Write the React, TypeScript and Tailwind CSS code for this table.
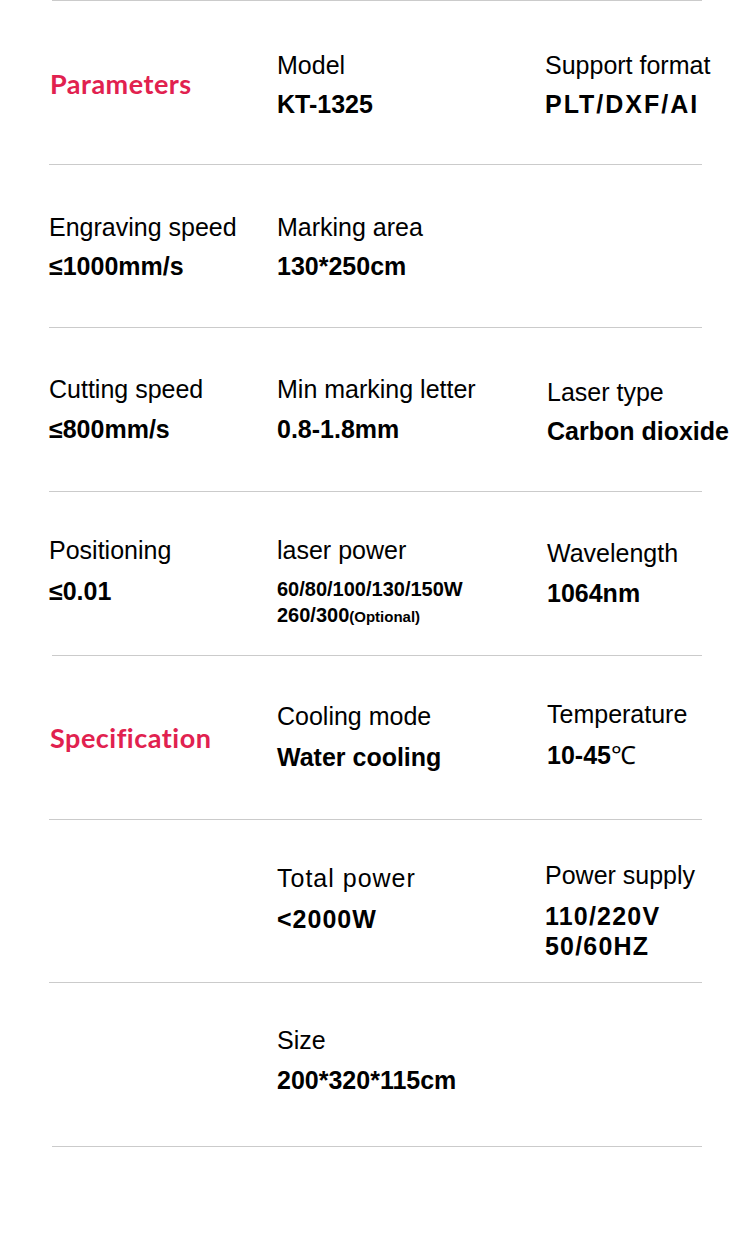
import type { ReactNode } from "react";

type Cell = {
  pad: string;
  label?: string;
  labelClass?: string;
  value?: ReactNode;
  valueClass?: string;
  valueSize?: string;
  heading?: string;
};

type Row = {
  height: string;
  line: string;
  cells: Cell[];
};

const arial = { fontFamily: '"Liberation Sans", Arial, sans-serif' };
const lato = { fontFamily: 'Lato, "Noto Sans", sans-serif', fontVariantLigatures: "none" as const };

const rows: Row[] = [
  {
    height: "h-[163px]",
    line: "ml-[52px] w-[650px]",
    cells: [
      { pad: "pt-[69px]", heading: "Parameters" },
      { pad: "pt-[52px]", label: "Model", value: "KT-1325", valueClass: "mt-[14px]" },
      {
        pad: "pt-[52px]",
        label: "Support format",
        value: "PLT/DXF/AI",
        valueClass: "mt-[14px] tracking-[2px]",
      },
    ],
  },
  {
    height: "h-[162px]",
    line: "ml-[49px] w-[653px]",
    cells: [
      { pad: "pt-[50px]", label: "Engraving speed", value: "≤1000mm/s", valueClass: "mt-[14px]" },
      { pad: "pt-[50px]", label: "Marking area", value: "130*250cm", valueClass: "mt-[14px]" },
      { pad: "pt-[50px]" },
    ],
  },
  {
    height: "h-[163px]",
    line: "ml-[49px] w-[653px]",
    cells: [
      { pad: "pt-[49px]", label: "Cutting speed", value: "≤800mm/s", valueClass: "mt-[15px]" },
      { pad: "pt-[49px]", label: "Min marking letter", value: "0.8-1.8mm", valueClass: "mt-[15px]" },
      {
        pad: "pt-[52px] pl-[2px]",
        label: "Laser type",
        value: "Carbon dioxide",
        valueClass: "mt-[14px]",
      },
    ],
  },
  {
    height: "h-[163px]",
    line: "ml-[49px] w-[653px]",
    cells: [
      { pad: "pt-[46px]", label: "Positioning", value: "≤0.01", valueClass: "mt-[16px]" },
      {
        pad: "pt-[46px]",
        label: "laser power",
        value: (
          <>
            60/80/100/130/150W
            <br />
            260/300<span className="text-[15px]">(Optional)</span>
          </>
        ),
        valueSize: "text-[20px] leading-[26px]",
        valueClass: "mt-[13px]",
      },
      {
        pad: "pt-[49px] pl-[2px]",
        label: "Wavelength",
        value: "1064nm",
        valueClass: "mt-[15px]",
      },
    ],
  },
  {
    height: "h-[163px]",
    line: "ml-[52px] w-[650px]",
    cells: [
      { pad: "pt-[68px]", heading: "Specification" },
      { pad: "pt-[48px]", label: "Cooling mode", value: "Water cooling", valueClass: "mt-[16px]" },
      {
        pad: "pt-[46px] pl-[2px]",
        label: "Temperature",
        value: (
          <>
            10-45<span className="font-normal">℃</span>
          </>
        ),
        valueClass: "mt-[16px]",
      },
    ],
  },
  {
    height: "h-[162px]",
    line: "ml-[49px] w-[653px]",
    cells: [
      { pad: "pt-[46px]" },
      {
        pad: "pt-[46px]",
        label: "Total power",
        labelClass: "tracking-[1px]",
        value: "<2000W",
        valueClass: "mt-[16px] tracking-[1px]",
      },
      {
        pad: "pt-[43px]",
        label: "Power supply",
        value: (
          <>
            110/220V
            <br />
            50/60HZ
          </>
        ),
        valueSize: "text-[25px] leading-[30px]",
        valueClass: "mt-[13px] tracking-[1.2px]",
      },
    ],
  },
  {
    height: "h-[163px]",
    line: "ml-[49px] w-[653px]",
    cells: [
      { pad: "pt-[45px]" },
      { pad: "pt-[45px]", label: "Size", value: "200*320*115cm", valueClass: "mt-[15px]" },
      { pad: "pt-[45px]" },
    ],
  },
];

function SpecCell({ cell }: { cell: Cell }) {
  if (cell.heading) {
    return (
      <div className={cell.pad}>
        <div
          className="text-[27px] leading-[27px] font-bold tracking-[0.5px] text-[#e1214f] pl-[1px]"
          style={lato}
        >
          {cell.heading}
        </div>
      </div>
    );
  }
  return (
    <div className={`${cell.pad} flex flex-col`} style={arial}>
      {cell.label && (
        <div className={`text-[25px] leading-[25px] text-black whitespace-nowrap ${cell.labelClass ?? ""}`}>
          {cell.label}
        </div>
      )}
      {cell.value && (
        <div
          className={`${cell.valueSize ?? "text-[25px] leading-[25px]"} font-bold text-black whitespace-nowrap ${cell.valueClass ?? ""}`}
        >
          {cell.value}
        </div>
      )}
    </div>
  );
}

export default function App() {
  return (
    <div className="w-[750px] h-[1250px] bg-white overflow-hidden">
      {rows.map((row, i) => (
        <div key={i}>
          <div className={`h-px bg-[#cbcbcb] ${row.line}`} />
          <div className={`${row.height} pl-[49px] grid grid-cols-[228px_268px_1fr]`}>
            {row.cells.map((cell, j) => (
              <SpecCell key={j} cell={cell} />
            ))}
          </div>
        </div>
      ))}
      <div className="h-px bg-[#cbcbcb] ml-[52px] w-[650px]" />
    </div>
  );
}
